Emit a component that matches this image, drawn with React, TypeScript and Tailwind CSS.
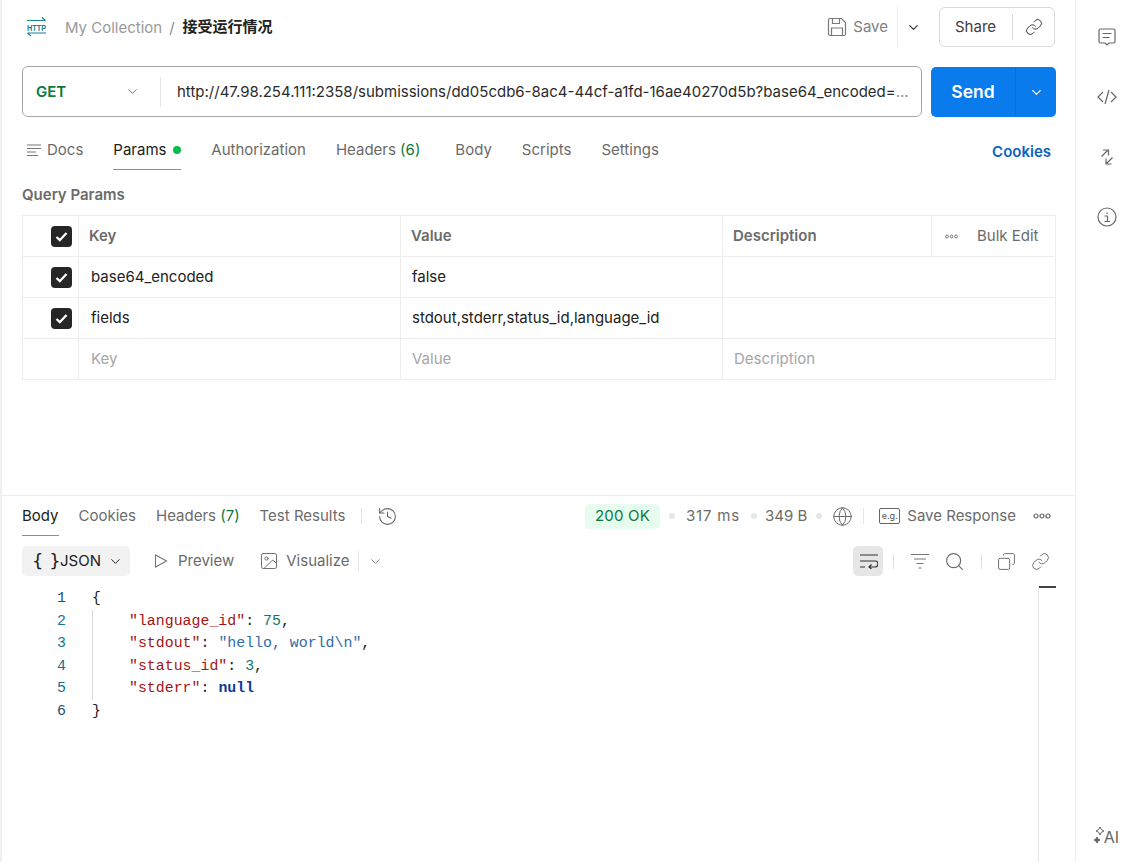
import React from "react";
import { ChevronDown, Search, Copy, Link, History, Image, Globe } from "lucide-react";

const Check = () => (
  <span className="w-[21px] h-[21px] rounded-[4px] bg-[#262626] flex items-center justify-center">
    <svg width="15" height="15" viewBox="0 0 15 15" fill="none"><path d="M2.500 8l3.300 3.200L12.500 4" stroke="#fff" strokeWidth="2.300" /></svg>
  </span>
);

const Cell = ({ children, className = "" }: { children?: React.ReactNode; className?: string }) => (
  <div className={`h-[41px] border-r border-b border-[#ededed] flex items-center ${className}`}>{children}</div>
);

const Tab = ({ children, active, cls = "" }: { children: React.ReactNode; active?: boolean; cls?: string }) => (
  <div className={`h-[40px] pt-[2px] flex items-center border-b ${active ? "text-[#212121] border-[#f26b3a]" : "text-[#6b6b6b] border-transparent"} ${cls}`}>{children}</div>
);

const Dot = () => <span className="block w-[6px] h-[6px] rounded-full bg-[#e6e6e6]" />;

const S = ({ children }: { children: React.ReactNode }) => <span className="text-[#a31515]">{children}</span>;

const Code = () => (
  <div className="flex pl-[30px] pt-[11px] text-[14.9px] leading-[22.5px] whitespace-pre" style={{ fontFamily: '"Liberation Mono", monospace' }}>
    <div className="w-[40px] text-[#16708f]">
      {[1, 2, 3, 4, 5, 6].map((n) => (
        <div key={n} className={`pl-[5px] ${n === 1 || n === 6 ? "text-[#1f4f73]" : ""}`}>{n}</div>
      ))}
    </div>
    <div className="text-[#212121]">
      <div>{"{"}</div>
      <div className="border-l border-[#d9d9d9] pl-[36px]">
        <div><S>"language_id"</S>: <span className="text-[#0c7a6b]">75</span>,</div>
        <div><S>"stdout"</S>: <span className="text-[#2f6ca8]">"hello, world\n"</span>,</div>
        <div><S>"status_id"</S>: <span className="text-[#0c7a6b]">3</span>,</div>
        <div><S>"stderr"</S>: <span className="text-[#0b3c9c] font-bold">null</span></div>
      </div>
      <div>{"}"}</div>
    </div>
  </div>
);

const I = { stroke: "currentColor", fill: "none", strokeWidth: 1.2 };

export default function App() {
  return (
    <div className="w-[1121px] h-[862px] flex bg-white overflow-hidden text-[15px] text-[#212121]" style={{ fontFamily: 'Inter, "Noto Sans CJK SC", sans-serif' }}>
      <div className="w-[1076px] shrink-0 flex flex-col border-l-2 border-r border-[#f0f0f0]">
        {/* Request */}
        <div className="h-[496px] shrink-0 border-b border-[#ededed] pl-[20px] pr-[19px]">
          <div className="h-[54px] pt-[7px] flex items-start">
            <div className="h-[40px] flex items-center">
              <svg width="22" height="20" viewBox="0 0 22 20" className="ml-[5px] text-[#1c7f93]" fill="none" stroke="currentColor" strokeWidth="1.100">
                <path d="M0 3.500h18.500M15 0.500l3.500 3" />
                <text x="0" y="13.500" fontSize="9" fontWeight="700" fill="currentColor" stroke="none" textLength="19" lengthAdjust="spacingAndGlyphs" fontFamily="Liberation Sans">HTTP</text>
                <path d="M0.500 16h18.500M0.500 16l3.500 3" />
              </svg>
              <span className="ml-[16px] pt-[2px] text-[#9a9a9a]">My Collection</span>
              <span className="ml-[7px] pt-[2px] text-[#8a8a8a]">/</span>
              <span className="ml-[8px] pt-[1px] font-semibold text-[#212121]">接受运行情况</span>
            </div>
            <div className="ml-auto flex items-center h-[40px] pr-[1px]">
              <svg width="20" height="20" viewBox="0 0 20 20" className="text-[#7a7a7a]" {...I}>
                <path d="M1.500 3a1.500 1.500 0 0 1 1.500-1.500h11.500l4 4V17a1.500 1.500 0 0 1-1.500 1.500H3A1.500 1.500 0 0 1 1.500 17z" />
                <path d="M5.500 1.500v5h7v-5M4.500 18.500v-7.500h11v7.500" />
              </svg>
              <span className="ml-[6px] text-[#808080]">Save</span>
              <div className="ml-[9px] h-[40px] border-l border-[#ededed]" />
              <ChevronDown className="ml-[8px] text-[#2b2b2b]" size={15} strokeWidth={1.8} />
              <div className="ml-[18px] w-[116px] h-[40px] border border-[#d9d9d9] rounded-[6px] flex items-center pl-[15px]">
                <span className="text-[#3d3d3d]">Share</span>
                <div className="ml-[16px] h-[26px] border-l border-[#d9d9d9]" />
                <Link className="ml-[12px] text-[#3d3d3d]" size={18} strokeWidth={1.3} />
              </div>
            </div>
          </div>
          {/* URL bar */}
          <div className="mt-[12px] h-[51px] flex gap-[9px]">
            <div className="flex-1 min-w-0 border border-[#a6a6a6] rounded-[6px] flex items-center">
              <span className="ml-[13px] pt-[2px] w-[89px] font-semibold text-[#0b7a3b]">GET</span>
              <ChevronDown className="text-[#6b6b6b]" size={15} strokeWidth={1.5} />
              <div className="ml-[20px] h-[30px] border-l border-[#e6e6e6]" />
              <div className="ml-[16px] pt-[1px] whitespace-nowrap text-[#2b2b2b]">
                http://47.98.254.111:2358/submissions/dd05cdb6-8ac4-44cf-a1fd-16ae40270d5b?base64_encoded=<span className="text-[#8a8a8a]">...</span>
              </div>
            </div>
            <div className="w-[125px] h-[50px] mt-[1px] rounded-[5px] bg-[#097bed] flex items-center text-white">
              <div className="w-[85px] h-full flex items-center justify-center font-semibold text-[17.5px] border-r border-[#0a6fd4]">Send</div>
              <div className="flex-1 flex justify-center"><ChevronDown size={15} strokeWidth={2} /></div>
            </div>
          </div>
          {/* Tabs */}
          <div className="mt-[12px] flex items-center pl-[5px] gap-[30px] h-[41px]">
            <Tab cls="gap-[6px]">
              <svg width="14" height="14" viewBox="0 0 14 14" stroke="#777" strokeWidth="1.100"><path d="M0 2h14M0 5.500h14M0 9h9M0 12.500h11" /></svg>
              Docs
            </Tab>
            <Tab active cls="gap-[7px] w-[68px]">Params<span className="w-[8px] h-[8px] rounded-full bg-[#0cbb52]" /></Tab>
            <Tab>Authorization</Tab>
            <Tab>Headers&nbsp;<span className="text-[#0b7a3b]">(6)</span></Tab>
            <Tab cls="ml-[5px]">Body</Tab>
            <Tab>Scripts</Tab>
            <Tab>Settings</Tab>
            <span className="ml-auto mr-[5px] mt-[6px] font-semibold text-[#0b62c4]">Cookies</span>
          </div>
          <div className="mt-[15px] h-[20px] leading-[20px] font-semibold text-[#6b6b6b]">Query Params</div>
          {/* Table */}
          <div className="mt-[10px] w-[1034px] border-t border-l border-[#ededed] grid grid-cols-[56px_322px_322px_209px_1fr]">
            <Cell className="justify-end pr-[6px]"><Check /></Cell>
            <Cell className="pl-[10px] font-semibold text-[#6b6b6b]">Key</Cell>
            <Cell className="pl-[10px] font-semibold text-[#6b6b6b]">Value</Cell>
            <Cell className="pl-[10px] font-semibold text-[#6b6b6b]">Description</Cell>
            <Cell className="pl-[13px] text-[#6b6b6b]">
              <svg width="13" height="5" viewBox="0 0 13 5" fill="none" stroke="#777"><circle cx="2" cy="2.500" r="1.400" /><circle cx="6.500" cy="2.500" r="1.400" /><circle cx="11" cy="2.500" r="1.400" /></svg>
              <span className="ml-[19px]">Bulk Edit</span>
            </Cell>

            <Cell className="justify-end pr-[6px]"><Check /></Cell>
            <Cell className="pl-[12px]">base64_encoded</Cell>
            <Cell className="pl-[11px]">false</Cell>
            <Cell className="col-span-2" />

            <Cell className="justify-end pr-[6px]"><Check /></Cell>
            <Cell className="pl-[12px]">fields</Cell>
            <Cell className="pl-[11px]">stdout,stderr,status_id,language_id</Cell>
            <Cell className="col-span-2" />

            <Cell />
            <Cell className="pl-[12px] text-[#a6a6a6]">Key</Cell>
            <Cell className="pl-[11px] text-[#a6a6a6]">Value</Cell>
            <Cell className="col-span-2 pl-[11px] text-[#a6a6a6]">Description</Cell>
          </div>
        </div>
        {/* Response */}
        <div className="flex-1 min-h-0 flex flex-col pl-[20px] pr-[19px]">
          <div className="h-[40px] flex items-center gap-[20px]">
            <Tab active>Body</Tab>
            <Tab>Cookies</Tab>
            <Tab>Headers&nbsp;<span className="text-[#0b7a3b]">(7)</span></Tab>
            <Tab>Test Results</Tab>
            <div className="-ml-[4px] h-[16px] border-l border-[#e6e6e6]" />
            <History className="-ml-[5px] text-[#666]" size={21} strokeWidth={1.2} />
            <div className="ml-auto flex items-center text-[#6b6b6b]">
              <span className="h-[25px] w-[75px] justify-center rounded-[5px] bg-[#e7fbef] text-[#0b7a3b] flex items-center tracking-[0.2px]">200 OK</span>
              <span className="ml-[9px]"><Dot /></span>
              <span className="ml-[11px] tracking-[0.8px]">317 ms</span>
              <span className="ml-[11px]"><Dot /></span>
              <span className="ml-[8px]">349 B</span>
              <span className="ml-[9px]"><Dot /></span>
              <Globe className="ml-[10px] text-[#666]" size={21} strokeWidth={1.1} />
              <div className="ml-[10px] h-[16px] border-l border-[#e6e6e6]" />
              <span className="ml-[15px] w-[21px] h-[16px] border border-[#666] rounded-[2px] text-[9px] leading-[14px] text-center text-[#555]">e.g.</span>
              <span className="ml-[7px]">Save Response</span>
              <svg className="ml-[17px] mr-[5px]" width="18" height="6" viewBox="0 0 18 6" fill="none" stroke="#666" strokeWidth="1.200"><circle cx="3" cy="3" r="2" /><circle cx="9" cy="3" r="2" /><circle cx="15" cy="3" r="2" /></svg>
            </div>
          </div>
          <div className="mt-[10px] h-[30px] flex items-center text-[#6b6b6b]">
            <div className="w-[108px] h-[30px] rounded-[5px] bg-[#f2f2f2] flex items-center text-[#212121] pl-[10px]">
              <span className="w-[20px] text-[18px] leading-none whitespace-nowrap" style={{ fontFamily: '"DejaVu Sans", sans-serif' }}>{"{\u00a0}"}</span>
              <span className="ml-[8px]">JSON</span>
              <ChevronDown className="ml-[7px]" size={15} strokeWidth={1.6} />
            </div>
            <svg className="ml-[24px]" width="14" height="14" viewBox="0 0 14 14" fill="none" stroke="#777" strokeWidth="1.100"><path d="M1.500 1v12l11-6z" /></svg>
            <span className="ml-[10px]">Preview</span>
            <Image className="ml-[25px] text-[#666]" size={20} strokeWidth={1.1} />
            <span className="ml-[7px]">Visualize</span>
            <div className="ml-[8px] h-[20px] border-l border-[#e6e6e6]" />
            <ChevronDown className="ml-[9px]" size={15} strokeWidth={1.3} />
            <div className="ml-auto flex items-center text-[#6b6b6b]">
              <div className="w-[30px] h-[30px] rounded-[5px] bg-[#e6e6e6] flex items-center justify-center">
                <svg width="19" height="16" viewBox="0 0 19 16" fill="none" stroke="#333" strokeWidth="1.200"><path d="M1 2h18M1 8h15a2.600 2.600 0 0 1 0 6h-6M12.500 11.500L10 14l2.500 2M1 14h5" /></svg>
              </div>
              <div className="ml-[10px] h-[15px] border-l border-[#e0e0e0]" />
              <svg className="ml-[17px]" width="18" height="16" viewBox="0 0 18 16" stroke="#777" strokeWidth="1.200"><path d="M0 1.500h18M3 6h12M5.500 10.500h7M7.500 15h3" /></svg>
              <Search className="ml-[15px]" size={21} strokeWidth={1.3} />
              <div className="ml-[16px] h-[15px] border-l border-[#e0e0e0]" />
              <Copy className="ml-[15px] -scale-x-100" size={19} strokeWidth={1.2} />
              <Link className="ml-[15px]" size={19} strokeWidth={1.2} />
              <div className="w-[6px]" />
            </div>
          </div>
          <div className="flex-1 flex min-h-0">
            <div className="flex-1"><Code /></div>
            <div className="w-[18px] mt-[10px] border-l border-[#e6e6e6]">
              <div className="h-[2px] bg-[#444]" />
            </div>
          </div>
        </div>
      </div>
      {/* Sidebar */}
      <div className="flex-1 flex flex-col items-center pt-[27px] pb-[16px] pl-[16px] text-[#666]">
        <div className="flex flex-col items-center gap-[40px]">
          <svg width="20" height="20" viewBox="0 0 20 20" {...I}><path d="M3.500 2h13A1.500 1.500 0 0 1 18 3.500v11a1.500 1.500 0 0 1-1.500 1.500H12l-2 2-2-2H3.500A1.500 1.500 0 0 1 2 14.500v-11A1.500 1.500 0 0 1 3.500 2zM5.500 6.500h9M5.500 10.500h7" /></svg>
          <svg width="20" height="20" viewBox="0 0 20 20" {...I}><path d="M6 5l-5 5 5 5M14 5l5 5-5 5M12 3L8 17" /></svg>
          <svg width="20" height="20" viewBox="0 0 20 20" {...I}><path d="M4.500 9.500l6-6M6 3h5.500v5.500M15.500 10.500l-6 6M14.500 17H9v-5.500" /></svg>
          <svg width="20" height="20" viewBox="0 0 20 20" {...I}><circle cx="10" cy="10" r="9" /><path d="M7.500 9h3v5.500M7.500 14.500h5.500M10 5.500v1.500" /></svg>
        </div>
        <div className="mt-auto flex items-end text-[#666]">
          <svg width="10" height="20" viewBox="0 0 10 20" fill="none" stroke="currentColor"><path d="M6 1l1.300 2.500L10 5 7.300 6.300 6 9 4.700 6.300 2 5l2.700-1.500z" /><path d="M3 11l1 2 2 1-2 1-1 2-1-2-2-1 2-1z" fill="currentColor" /></svg>
          <span className="text-[16px] leading-[18px]">AI</span>
        </div>
      </div>
    </div>
  );
}
